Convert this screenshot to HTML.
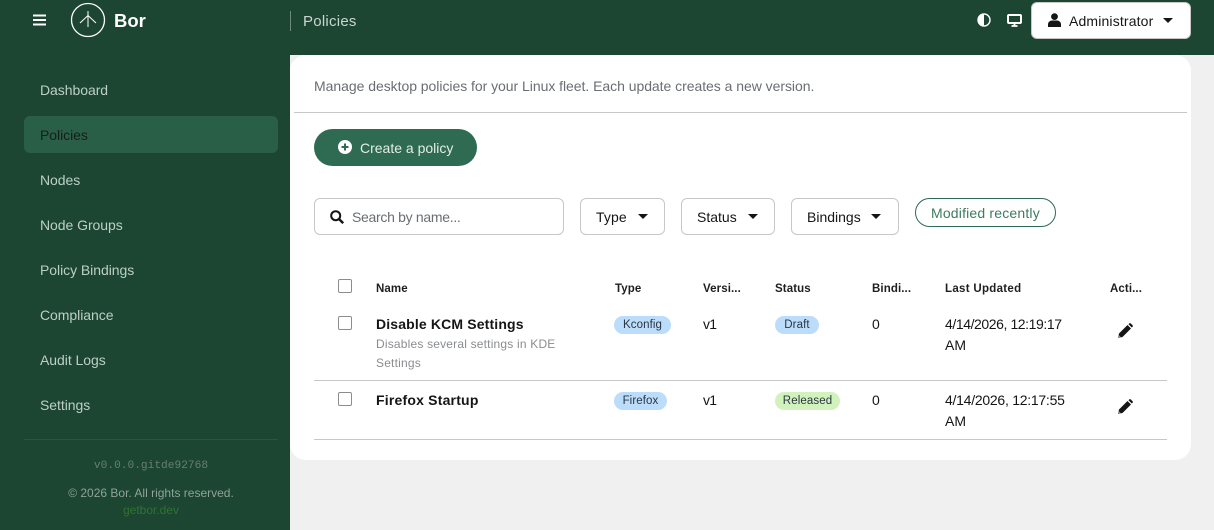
<!DOCTYPE html>
<html><head><meta charset="utf-8"><title>Policies</title>
<style>
*{box-sizing:border-box}
html,body{margin:0;padding:0;width:1214px;height:530px;overflow:hidden;background:#f0f0f0;font-family:"Liberation Sans",sans-serif;color:#151515}
.t{position:absolute;white-space:nowrap;line-height:20px;font-size:14px}
.b{position:absolute}
.nav{color:#bcd0c5;left:40px;letter-spacing:-.05px}
.btn{position:absolute;top:198px;height:37px;border:1px solid #c7c7c7;border-radius:6px;background:#fff}
.th{font-size:11.5px;font-weight:700;color:#1f1f1f;letter-spacing:.1px}
.pill{position:absolute;height:18px;border-radius:9px;font-size:11.5px;line-height:19px;text-align:center;color:#2b3640;letter-spacing:.1px}
.cb{position:absolute;left:338px;width:14px;height:14px;border:1px solid #8a8d90;border-radius:2px;background:#fff}
.hr{position:absolute;height:1px;background:#c7c7c7}
svg{position:absolute;display:block}
</style></head><body>
<div class="b" style="left:0;top:0;width:1214px;height:55px;background:#1c4532"></div>
<div class="b" style="left:0;top:0;width:290px;height:530px;background:#1c4532"></div>
<div class="b" style="left:290px;top:55px;width:901px;height:405px;background:#fff;border-radius:16px"></div>

<svg style="left:33px;top:14px" width="13" height="12" viewBox="0 0 13 12"><path d="M0 1.500h13M0 6h13M0 10.500h13" stroke="#fff" stroke-width="2"/></svg>
<svg style="left:70px;top:2px" width="36" height="36" viewBox="0 0 36 36" fill="none" stroke="#fff"><circle cx="18" cy="18" r="16.5" stroke-width="1.3"/><path d="M18 9v16M18 13.500l-8 7.500M18 13.500l8 7.500" stroke-width="1"/></svg>
<div class="t" style="left:114px;top:11px;font-size:18.500px;font-weight:700;color:#fff">Bor</div>
<div class="b" style="left:290px;top:11px;width:1px;height:20px;background:#6f8a7d"></div>
<div class="t" style="left:303px;top:12px;font-size:15px;color:#c9d6cf;letter-spacing:.25px">Policies</div>

<svg style="left:977px;top:13px" width="14" height="14" viewBox="0 0 14 14"><circle cx="7" cy="7" r="6" fill="#1c4532" stroke="#fff" stroke-width="1.4"/><path d="M7 1a6 6 0 0 0 0 12z" fill="#fff"/></svg>
<svg style="left:1007px;top:14px" width="15" height="13" viewBox="0 0 15 13"><rect x="1" y="1" width="13" height="8" rx="1" fill="none" stroke="#fff" stroke-width="2"/><path d="M4.500 12h6M7.500 9v3" stroke="#fff" stroke-width="1.800"/></svg>
<div class="b" style="left:1031px;top:2px;width:160px;height:37px;background:#fff;border:1px solid #c7c7c7;border-radius:6px"></div>
<svg style="left:1048px;top:13px" width="13" height="14" viewBox="0 0 13 14"><circle cx="6.500" cy="3.600" r="3.400" fill="#151515"/><path d="M0 14v-2.500c0-2.500 2-4 4-4h5c2 0 4 1.500 4 4V14z" fill="#151515"/></svg>
<div class="t" style="left:1069px;top:11px;letter-spacing:.15px">Administrator</div>
<svg style="left:1163px;top:18px" width="10" height="5" viewBox="0 0 10 5"><path d="M0 0h10L5 5z" fill="#151515"/></svg>

<div class="t nav" style="top:80px">Dashboard</div>
<div class="b" style="left:24px;top:116px;width:254px;height:37px;background:#2a5f47;border-radius:6px"></div>
<div class="t nav" style="top:125px;color:#151f1a">Policies</div>
<div class="t nav" style="top:170px">Nodes</div>
<div class="t nav" style="top:215px">Node Groups</div>
<div class="t nav" style="top:260px">Policy Bindings</div>
<div class="t nav" style="top:305px">Compliance</div>
<div class="t nav" style="top:350px">Audit Logs</div>
<div class="t nav" style="top:395px">Settings</div>
<div class="b" style="left:24px;top:439px;width:254px;height:1px;background:#2f5342"></div>
<div class="t" style="left:0;width:302px;text-align:center;top:456px;font:11.200px/20px 'Liberation Mono',monospace;color:#67806f">v0.0.0.gitde92768</div>
<div class="t" style="left:0;width:302px;text-align:center;top:483px;font-size:12px;color:#8fa399">© 2026 Bor. All rights reserved.</div>
<div class="t" style="left:0;width:302px;text-align:center;top:500px;font-size:12px;color:#2f7433">getbor.dev</div>

<div class="t" style="left:314px;top:76px;color:#6a6e73;letter-spacing:-.04px">Manage desktop policies for your Linux fleet. Each update creates a new version.</div>
<div class="hr" style="left:294px;top:112px;width:893px"></div>

<div class="b" style="left:314px;top:129px;width:163px;height:37px;border-radius:19px;background:#2f6b52"></div>
<svg style="left:338px;top:140px" width="14" height="14" viewBox="0 0 14 14"><circle cx="7" cy="7" r="7" fill="#fff"/><path d="M7 3.500v7M3.500 7h7" stroke="#2f6b52" stroke-width="2"/></svg>
<div class="t" style="left:360px;top:138px;color:#e3ece7">Create a policy</div>

<div class="btn" style="left:314px;width:250px"></div>
<svg style="left:330px;top:210px" width="14" height="14" viewBox="0 0 14 14" fill="none" stroke="#151515"><circle cx="5.700" cy="5.700" r="4.500" stroke-width="2"/><path d="M9 9l4.200 4.200" stroke-width="2.400"/></svg>
<div class="t" style="left:352px;top:207px;color:#6a6e73;letter-spacing:-.3px">Search by name...</div>

<div class="btn" style="left:580px;width:85px"></div>
<div class="t" style="left:596px;top:207px;letter-spacing:.1px">Type</div>
<svg style="left:638px;top:214px" width="10" height="5" viewBox="0 0 10 5"><path d="M0 0h10L5 5z" fill="#151515"/></svg>
<div class="btn" style="left:681px;width:94px"></div>
<div class="t" style="left:697px;top:207px">Status</div>
<svg style="left:748px;top:214px" width="10" height="5" viewBox="0 0 10 5"><path d="M0 0h10L5 5z" fill="#151515"/></svg>
<div class="btn" style="left:791px;width:108px"></div>
<div class="t" style="left:807px;top:207px">Bindings</div>
<svg style="left:871px;top:214px" width="10" height="5" viewBox="0 0 10 5"><path d="M0 0h10L5 5z" fill="#151515"/></svg>
<div class="b" style="left:915px;top:198px;width:141px;height:29px;border:1px solid #2f6b52;border-radius:15px"></div>
<div class="t" style="left:931px;top:203px;color:#3f7a61;letter-spacing:.18px">Modified recently</div>

<div class="cb" style="top:279px"></div>
<div class="t th" style="left:376px;top:279px">Name</div>
<div class="t th" style="left:615px;top:279px">Type</div>
<div class="t th" style="left:703px;top:279px">Versi...</div>
<div class="t th" style="left:775px;top:279px">Status</div>
<div class="t th" style="left:872px;top:279px">Bindi...</div>
<div class="t th" style="left:945px;top:279px;letter-spacing:.3px">Last Updated</div>
<div class="t th" style="left:1110px;top:279px">Acti...</div>

<div class="cb" style="top:316px"></div>
<div class="t" style="left:376px;top:314px;font-weight:700;letter-spacing:.15px">Disable KCM Settings</div>
<div class="t" style="left:376px;top:334px;font-size:12px;color:#8a8d90;letter-spacing:.19px">Disables several settings in KDE</div>
<div class="t" style="left:376px;top:353px;font-size:12px;color:#8a8d90;letter-spacing:.19px">Settings</div>
<div class="pill" style="left:614px;top:316px;width:57px;background:#bcdcfb">Kconfig</div>
<div class="t" style="left:703px;top:314px;letter-spacing:-.8px">v1</div>
<div class="pill" style="left:775px;top:316px;width:44px;background:#bcdcfb">Draft</div>
<div class="t" style="left:872px;top:314px">0</div>
<div class="t" style="left:945px;top:314px;letter-spacing:-.42px">4/14/2026, 12:19:17</div>
<div class="t" style="left:945px;top:335px">AM</div>
<svg style="left:1118px;top:323px" width="15" height="15" viewBox="0 0 15 15"><path d="M0 15l1-4.500L9.500 2l3.500 3.500L4.500 14z" fill="#151515"/><path d="M10.500 1.200l.8-.8c.4-.4 1-.4 1.400 0l1.900 1.900c.4.400.4 1 0 1.400l-.8.800z" fill="#151515"/><path d="M0 15l.7-3 2.300 2.300z" fill="#8a8d90"/></svg>
<div class="hr" style="left:314px;top:380px;width:853px"></div>

<div class="cb" style="top:392px"></div>
<div class="t" style="left:376px;top:390px;font-weight:700;letter-spacing:.2px">Firefox Startup</div>
<div class="pill" style="left:614px;top:392px;width:53px;background:#bcdcfb">Firefox</div>
<div class="t" style="left:703px;top:390px;letter-spacing:-.8px">v1</div>
<div class="pill" style="left:775px;top:392px;width:65px;background:#d1f2bd">Released</div>
<div class="t" style="left:872px;top:390px">0</div>
<div class="t" style="left:945px;top:390px;letter-spacing:-.26px">4/14/2026, 12:17:55</div>
<div class="t" style="left:945px;top:411px">AM</div>
<svg style="left:1118px;top:399px" width="15" height="15" viewBox="0 0 15 15"><path d="M0 15l1-4.500L9.500 2l3.500 3.500L4.500 14z" fill="#151515"/><path d="M10.500 1.200l.8-.8c.4-.4 1-.4 1.400 0l1.900 1.900c.4.400.4 1 0 1.400l-.8.800z" fill="#151515"/><path d="M0 15l.7-3 2.300 2.300z" fill="#8a8d90"/></svg>
<div class="hr" style="left:314px;top:439px;width:853px"></div>
</body></html>
